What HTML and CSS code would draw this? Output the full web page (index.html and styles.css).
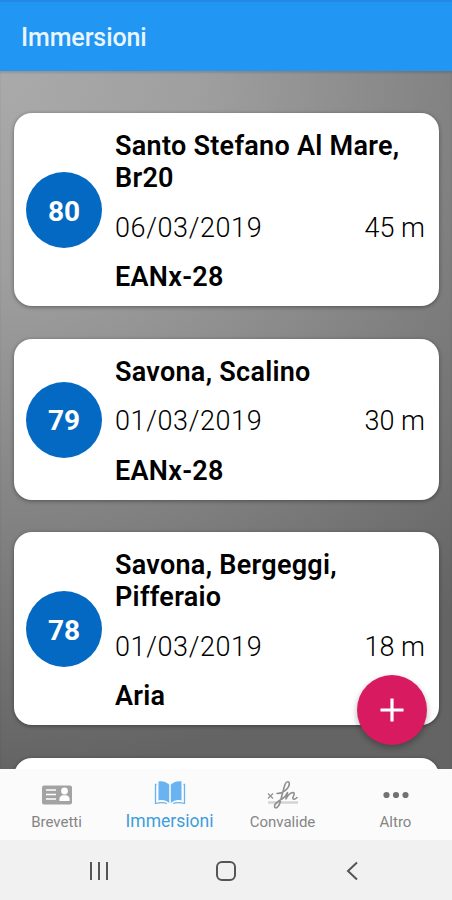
FILE: index.html
```html
<!DOCTYPE html>
<html lang="it">
<head>
  <meta charset="UTF-8" />
  <meta name="viewport" content="width=device-width, initial-scale=1.0">
  <title>Immersioni</title>
  <link rel="stylesheet" href="styles.css">
</head>
<body>

<!-- Header -->
<header class="app-header">
  <h1>Immersioni</h1>
</header>

<!-- Dive list -->
<main class="dive-list">
  <article class="dive-card">
    <div class="dive-number">80</div>
    <div class="dive-details">
      <h2>Santo Stefano Al Mare, Br20</h2>
      <div class="dive-row"><span class="date">06/03/2019</span><span>45 m</span></div>
      <p class="dive-gas">EANx-28</p>
    </div>
  </article>

  <article class="dive-card">
    <div class="dive-number">79</div>
    <div class="dive-details">
      <h2>Savona, Scalino</h2>
      <div class="dive-row"><span class="date">01/03/2019</span><span>30 m</span></div>
      <p class="dive-gas">EANx-28</p>
    </div>
  </article>

  <article class="dive-card">
    <div class="dive-number">78</div>
    <div class="dive-details">
      <h2>Savona, Bergeggi, Pifferaio</h2>
      <div class="dive-row"><span class="date">01/03/2019</span><span>18 m</span></div>
      <p class="dive-gas">Aria</p>
    </div>
  </article>

  <article class="dive-card next-card"></article>

  <button class="add-button" aria-label="Aggiungi">
    <svg width="24" height="24" viewBox="0 0 24 24"><path d="M12 0.5v23M0.5 12h23" stroke="#fff" stroke-width="3.2"/></svg>
  </button>
</main>

<!-- Tabs -->
<nav class="tab-bar">
  <a href="#" class="tab-item">
    <svg width="30" height="20" viewBox="0 0 30 20">
      <rect x="0" y="0.5" width="30" height="19" rx="2" fill="#a3a3a3"/>
      <path d="M4 5h10M4 9.5h10M4 14h10" stroke="#fff" stroke-width="1.5"/>
      <circle cx="22.500" cy="6" r="3.400" fill="#fff"/>
      <path d="M17.500 16v-2.500c0-2 2-3 3.500-3.300h3c1.500.3 3.500 1.300 3.500 3.300V16z" fill="#fff"/>
    </svg>
    <span>Brevetti</span>
  </a>
  <a href="#" class="tab-item active">
    <svg width="32" height="26" viewBox="0 0 32 26">
      <path d="M4.500 1.500C8.500.7 12 2 15.200 4.500V23C12 20.200 8.500 19.500 4.500 20.500z" fill="#6ab3f1"/>
      <path d="M27.500 1.500C23.500.7 20 2 16.800 4.500V23c3.200-2.800 6.700-3.500 10.700-2.500z" fill="#6ab3f1"/>
      <path d="M2.500 4.500H1.500v19C5 22.500 9 22 13 23.500M29.500 4.500h1v19C27 22.500 23 22 19 23.500" fill="none" stroke="#6ab3f1" stroke-width="1.300"/>
    </svg>
    <span>Immersioni</span>
  </a>
  <a href="#" class="tab-item">
    <svg width="32" height="30" viewBox="0 0 32 30">
      <path d="M1 22.500h30" stroke="#d4d4d4" stroke-width="2.500"/>
      <path d="M1 13.500l5 5M6 13.500l-5 5" stroke="#909090" stroke-width="1.200"/>
      <path d="M10 13.500c5.500 0 12-4.500 12.300-9.500.2-3-3-3-4.300.5-2.200 6.500-3.300 13-5.300 19-1.200 4-4.500 5.700-5.200 3.200-.7-3 4.500-6.200 8.500-8.500 2.500-1.500 3.500-3.700 4.500-5.700-.7 2.500-1.300 4.800-1.500 6.500 1.500-3 3.300-5.500 5.800-6.200 2.700-.6 3 .7 1.700 3.200-1 2-1 3.500.8 3.200 1.200-.2 2-.9 2.700-1.700" fill="none" stroke="#909090" stroke-width="1.600" stroke-linecap="round" stroke-linejoin="round"/>
    </svg>
    <span>Convalide</span>
  </a>
  <a href="#" class="tab-item">
    <svg width="26" height="8" viewBox="0 0 26 8" fill="#727272">
      <circle cx="3.500" cy="4" r="3.100"/><circle cx="13" cy="4" r="3.100"/><circle cx="22.500" cy="4" r="3.100"/>
    </svg>
    <span>Altro</span>
  </a>
</nav>

<!-- Android keys -->
<footer class="system-bar">
  <svg width="20" height="20" viewBox="0 0 20 20"><path d="M2 1v18M10 1v18M18 1v18" stroke="#555" stroke-width="2"/></svg>
  <svg width="22" height="22" viewBox="0 0 22 22"><rect x="2" y="2" width="18" height="18" rx="5" fill="none" stroke="#555" stroke-width="2"/></svg>
  <svg width="12" height="20" viewBox="0 0 12 20"><path d="M11 1.500L2 10l9 8.500" fill="none" stroke="#555" stroke-width="2"/></svg>
</footer>

</body>
</html>
```
FILE: styles.css
```css
* {
  box-sizing: border-box;
}

body {
  margin: 0;
  height: 900px;
  display: flex;
  flex-direction: column;
  overflow: hidden;
  font-family: Roboto, sans-serif;
  color: #000;
}

h1, h2, p {
  margin: 0;
}

.app-header {
  height: 71px;
  flex-shrink: 0;
  display: flex;
  align-items: center;
  padding: 1px 21px 0;
  background: #2196f3;
  border-top: 2px solid #2389e4;
}

.app-header h1 {
  font-size: 25px;
  font-weight: 500;
  letter-spacing: -0.1px;
  color: #e9f5ff;
}

/* Dive cards */
.dive-list {
  position: relative;
  height: 698px;
  flex-shrink: 0;
  overflow: hidden;
  display: flex;
  flex-direction: column;
  gap: 32.5px;
  padding: 42px 13px 0 14px;
  background: radial-gradient(circle at 0 0, #aaa 0, #9f9f9f 200px, #828282 452px, #646464 700px);
  box-shadow: inset 0 2px 2px rgba(0,0,0,0.12);
}

.dive-card {
  flex-shrink: 0;
  display: flex;
  align-items: center;
  padding: 17px 14px 13px 12px;
  background: #fff;
  border-radius: 18px;
  box-shadow: 0 1px 4px rgba(0,0,0,0.4);
}

.next-card {
  height: 100px;
}

.dive-number {
  width: 76px;
  height: 76px;
  flex-shrink: 0;
  display: flex;
  align-items: center;
  justify-content: center;
  margin-bottom: 3px;
  padding-top: 2px;
  border-radius: 50%;
  background: #0469c2;
  color: #fff;
  font-size: 28px;
  font-weight: 700;
}

.dive-details {
  flex: 1;
  margin-left: 13px;
  display: flex;
  flex-direction: column;
  gap: 17.5px;
  font-size: 27px;
  line-height: 32px;
}

.dive-details h2,
.dive-gas {
  font-size: 27px;
  font-weight: 600;
  letter-spacing: 0.28px;
}

.dive-row {
  display: flex;
  justify-content: space-between;
  font-weight: 300;
}

.date {
  letter-spacing: 0.6px;
}

.add-button {
  position: absolute;
  right: 25px;
  bottom: 24px;
  width: 70px;
  height: 70px;
  display: flex;
  align-items: center;
  justify-content: center;
  padding: 0;
  border: none;
  border-radius: 50%;
  background: #d81b60;
  box-shadow: 0 3px 6px rgba(0,0,0,0.3);
}

/* Bottom tabs */
.tab-bar {
  height: 71px;
  flex-shrink: 0;
  display: grid;
  grid-template-columns: repeat(4, 1fr);
  background: #fbfbfb;
}

.tab-item {
  display: grid;
  grid-template-rows: 32px 22px;
  align-items: center;
  justify-items: center;
  align-content: start;
  padding-top: 10px;
  text-decoration: none;
  font-size: 15px;
  color: #858585;
}

.tab-item.active {
  grid-template-rows: 32px 24px;
  padding-top: 8px;
  font-size: 17.5px;
  color: #3e9edc;
}

.system-bar {
  height: 60px;
  flex-shrink: 0;
  display: flex;
  align-items: center;
  justify-content: space-between;
  padding: 2px 94px 0 89px;
  background: #f1f1f1;
}

.system-bar svg:nth-child(2) {
  margin-right: 4px;
}
```
